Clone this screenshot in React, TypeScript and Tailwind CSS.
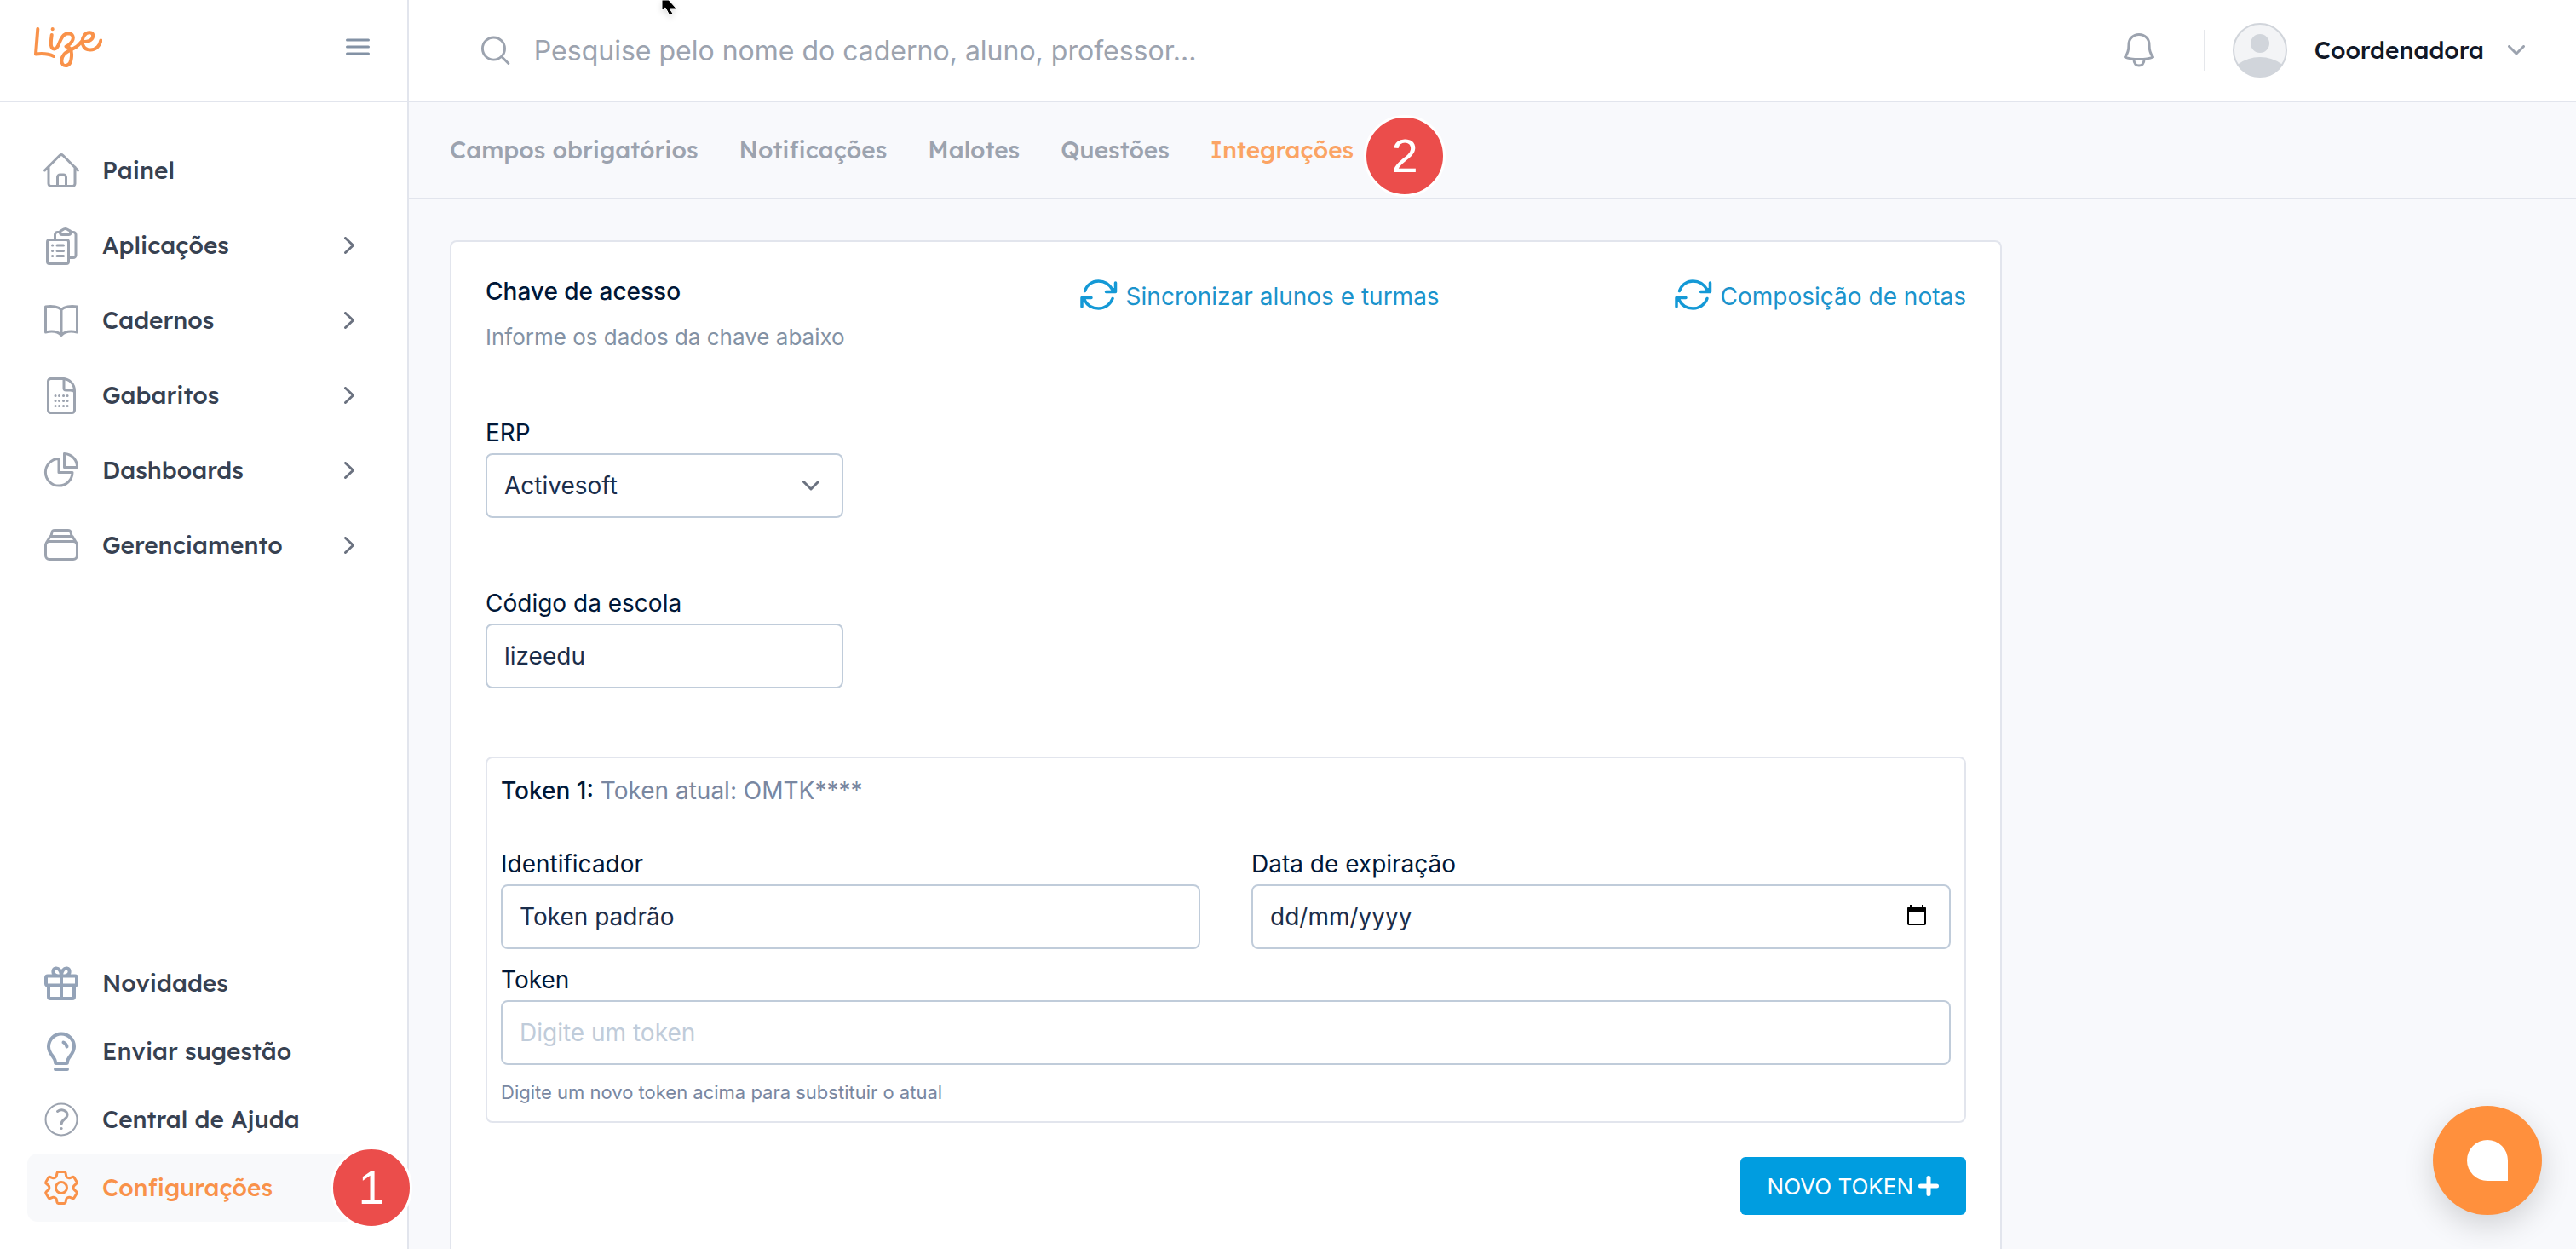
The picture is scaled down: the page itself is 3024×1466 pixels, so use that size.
import React from 'react';

type IconProps = { children: React.ReactNode; width?: number };

function NavIcon({ children, width = 3 }: IconProps) {
  return (
    <svg
      className="size-12 shrink-0"
      viewBox="0 0 48 48"
      fill="none"
      stroke="currentColor"
      strokeWidth={width}
      strokeLinecap="round"
      strokeLinejoin="round"
      aria-hidden="true"
    >
      {children}
    </svg>
  );
}

const homeIcon = (
  <NavIcon width={3}>
    <path d="M4.500 24 22 6.500a2.900 2.900 0 0 1 4 0L43.500 24M9 20v19.500a3 3 0 0 0 3 3h25a3 3 0 0 0 3-3V20M19.500 42.500V32a3 3 0 0 1 3-3h4a3 3 0 0 1 3 3v10.500" />
  </NavIcon>
);

const clipboardIcon = (
  <NavIcon width={3}>
    <rect x="7.500" y="17.500" width="25" height="28" rx="2.500" />
    <path d="M16.500 17V11.500a3 3 0 0 1 3-3h3.500M34.500 8.500H38a3 3 0 0 1 3 3V35.500a3 3 0 0 1-3 3h-4.500M24 6.500c1.500 0 1.800-2 4.700-2s3.300 2 4.800 2c2 0 2.500 5-1 5h-7.500c-3.500 0-3-5-1-5zM19 24h7.500M19 30.500h7.500M19 36.500h7.500M13.500 24h.2M13.500 30.500h.2M13.500 36.500h.2" />
  </NavIcon>
);

const bookIcon = (
  <NavIcon width={3}>
    <path d="M24 11.500c-3-3.300-11-5-18.500-3.500v30c8-1.800 14.500-.8 18.500 3.500 4-4.300 10.500-5.300 18.500-3.500V8C35 6.500 27 8.200 24 11.500zM24 11.500v30" />
  </NavIcon>
);

const sheetIcon = (
  <NavIcon width={3}>
    <path d="M26 4.500H11.500a3 3 0 0 0-3 3v34a3 3 0 0 0 3 3h25a3 3 0 0 0 3-3V19C39.500 10.500 33 4.500 26 4.500zM27 4.500v11a2.500 2.500 0 0 0 2.500 2.500h5c3 0 5 1 5 3" />
    <path d="M17 24.500h.1M21.500 24.500h.1M26.500 24.500h.1M31 24.500h.1M17 30.500h.1M21.500 30.500h.1M26.500 30.500h.1M31 30.500h.1M17 36.500h.1M21.500 36.500h.1M26.500 36.500h.1M31 36.500h.1" />
  </NavIcon>
);

const pieIcon = (
  <NavIcon width={3}>
    <path d="M21 10.500A15.800 15.800 0 1 0 37 26.500H21z" />
    <path d="M27.500 4.500V20.500H42.500A15.500 15.500 0 0 0 27.500 4.500z" />
  </NavIcon>
);

const stackIcon = (
  <NavIcon width={3}>
    <rect x="5.500" y="19.500" width="37" height="21" rx="4.500" />
    <path d="M6.500 21 11 13.500h26l4.500 7.500M12 13l.8-3.500a3.500 3.500 0 0 1 3.400-3h15.600a3.500 3.500 0 0 1 3.400 3L36 13" />
  </NavIcon>
);

const giftIcon = (
  <NavIcon width={4}>
    <rect x="6" y="15.500" width="36" height="11" rx="2" />
    <path d="M9 27v13a2 2 0 0 0 2 2h26a2 2 0 0 0 2-2V27M24 15.500V42M24 15c0-5-3-9-6.500-8.500C13 7.500 13.500 14 18 15M24 15c0-5 3-9 6.500-8.500C35 7.500 34.500 14 30 15" />
  </NavIcon>
);

const bulbIcon = (
  <NavIcon width={4}>
    <path d="M17 37c0-7-8-9-8-18.500a15 15 0 0 1 30 0C39 28 31 30 31 37a1 1 0 0 1-1 1H18a1 1 0 0 1-1-1zM17 45h14M26.500 13.500c2 .8 3.500 2.500 4 5" />
  </NavIcon>
);

const helpIcon = (
  <NavIcon width={2}>
    <circle cx="24" cy="24" r="18.500" />
    <path strokeWidth={3} d="M19.500 14.500c5-3.500 11.500-1 11.500 4 0 5.500-7 5-7 11" />
    <path strokeWidth={3} d="M24 34.500h.1" />
  </NavIcon>
);

const gearIcon = (
  <NavIcon width={3}>
    <circle cx="24" cy="24" r="6.500" />
    <path d="M20.500 5.500h7a1.500 1.500 0 0 1 1.500 1.200l.8 4c.2 1 2.700 2.400 3.700 2.100l3.800-1.300a1.500 1.500 0 0 1 1.800.7l3 5.100a1.500 1.500 0 0 1-.3 1.900l-3 2.700c-.8.700-.8 3.500 0 4.200l3 2.700a1.500 1.500 0 0 1 .3 1.900l-3 5.100a1.500 1.500 0 0 1-1.800.7l-3.800-1.300c-1-.3-3.500 1.100-3.700 2.100l-.8 4a1.500 1.500 0 0 1-1.500 1.200h-7a1.500 1.500 0 0 1-1.500-1.200l-.8-4c-.2-1-2.700-2.400-3.700-2.100l-3.800 1.300a1.500 1.500 0 0 1-1.800-.7l-3-5.100a1.500 1.500 0 0 1 .3-1.900l3-2.700c.8-.7.800-3.500 0-4.200l-3-2.700a1.500 1.500 0 0 1-.3-1.900l3-5.100a1.500 1.500 0 0 1 1.800-.7l3.800 1.300c1 .3 3.500-1.100 3.700-2.100l.8-4a1.500 1.500 0 0 1 1.500-1.200z" />
  </NavIcon>
);

function Logo() {
  return (
    <svg
      className="h-12 w-20"
      viewBox="0 0 80 48"
      fill="none"
      stroke="#f9924a"
      strokeWidth="4"
      strokeLinecap="round"
      strokeLinejoin="round"
      role="img"
      aria-label="Lize"
    >
      <path d="M4.300 3 2 32.500C9 31.700 17 32 23 35" />
      <path d="M21.700 3v.2" />
      <path d="M20.700 10C20 15 19.500 19 20 22.500 20.700 27.500 26 28 28.500 22 31 16.500 33 8.500 40 8.300c6 0 7 5.200 4.500 9.200-1.800 3-4.500 5-7 6 5.500.5 7 4.500 6.500 11.500-.5 7.500-3.500 11-7 11-5.500 0-6-8-2-13 3.500-4.500 10-6 14.500-9 2.500-1.800 4.500-4 6.500-6.500 5 1.500 13-.500 13.200-6.500.1-4.500-6.700-5-10-.8-5 6.500-2.700 17.300 6.800 17.300 7 0 11.500-5.500 12.300-11" />
    </svg>
  );
}

function Chevron() {
  return (
    <svg className="h-5 w-3" viewBox="0 0 12 20" fill="none" stroke="#6b7280" strokeWidth="3" strokeLinecap="round" strokeLinejoin="round" aria-hidden="true">
      <path d="M1.500 1.500 10.500 10l-9 8.500" />
    </svg>
  );
}

function StepBadge({ n }: { n: number }) {
  return (
    <span className="flex size-24 items-center justify-center rounded-full border-3 border-white bg-[#eb4d4b] font-['Liberation_Sans',sans-serif] text-[56px] leading-none text-white">
      {n}
    </span>
  );
}

function SyncIcon() {
  return (
    <svg className="h-9 w-11" viewBox="0 0 44 36" fill="none" stroke="#1499d6" strokeWidth="3.500" strokeLinecap="round" strokeLinejoin="round" aria-hidden="true">
      <path d="M5.500 13.500C8 6.500 14 2 21.500 2 29 2 34.500 6 38 12M41.500 4v10.500H30.500M38 22.500C35.500 29.500 29 34 21.500 34 14 34 8 30 5 24M2 32V21.500h11" />
      <path d="M41.500 14.500h-6l6-6zM2 21.500h6l-6 6z" fill="#1499d6" strokeWidth="1" />
    </svg>
  );
}

const mainNav = [
  { label: 'Painel', icon: homeIcon, expandable: false },
  { label: 'Aplicações', icon: clipboardIcon, expandable: true },
  { label: 'Cadernos', icon: bookIcon, expandable: true },
  { label: 'Gabaritos', icon: sheetIcon, expandable: true },
  { label: 'Dashboards', icon: pieIcon, expandable: true },
  { label: 'Gerenciamento', icon: stackIcon, expandable: true },
];

const footerNav = [
  { label: 'Novidades', icon: giftIcon, tone: 'text-[#94a3b8]' },
  { label: 'Enviar sugestão', icon: bulbIcon, tone: 'text-[#94a3b8]' },
  { label: 'Central de Ajuda', icon: helpIcon, tone: 'text-[#9ca3af]' },
];

const tabs = ['Campos obrigatórios', 'Notificações', 'Malotes', 'Questões'];

const fieldBase = 'h-19 w-full rounded-lg border-2 border-[#c0ccda] bg-white px-5 text-[28px] text-[#1b2e4b] outline-none';
const field = `${fieldBase} placeholder:text-[#c0ccda]`;
const label = 'block text-[28px] leading-10 text-[#001737]';

function Sidebar() {
  return (
    <aside className="flex w-120 shrink-0 flex-col border-r-2 border-[#e2e5ed] bg-white font-['Lexend','Inter',sans-serif] text-[28px] font-medium text-[#374151]">
      <div className="flex h-30 shrink-0 items-center justify-between border-b-2 border-[#e2e5ed] pr-11 pb-2 pl-10">
        <a href="#inicio">
          <Logo />
        </a>
        <button type="button" aria-label="Recolher menu">
          <svg className="h-5 w-7" viewBox="0 0 28 20" stroke="#8392a5" strokeWidth="3" strokeLinecap="round" aria-hidden="true">
            <path d="M1.500 2h25M1.500 10h25M1.500 18h25" />
          </svg>
        </button>
      </div>
      <nav className="flex flex-1 flex-col gap-2 px-8 pt-10">
        {mainNav.map((item) => (
          <a key={item.label} href="#menu" className="flex h-20 items-center gap-6 pr-[30px] pl-4">
            <span className="text-[#9ca3af]">{item.icon}</span>
            <span className="flex-1">{item.label}</span>
            {item.expandable && <Chevron />}
          </a>
        ))}
      </nav>
      <nav className="flex flex-col px-8 pb-8">
        {footerNav.map((item) => (
          <a key={item.label} href="#menu" className="flex h-20 items-center gap-6 pl-4">
            <span className={item.tone}>{item.icon}</span>
            <span>{item.label}</span>
          </a>
        ))}
        <a href="#configuracoes" className="relative flex h-20 items-center gap-6 rounded-xl bg-[#f8f9fb] pl-4 text-[#f9924a]">
          <span>{gearIcon}</span>
          <span>Configurações</span>
          <span className="absolute -top-2 -right-[38px]">
            <StepBadge n={1} />
          </span>
        </a>
      </nav>
    </aside>
  );
}

function TopBar() {
  return (
    <header className="flex h-30 shrink-0 items-center border-b-2 border-[#e2e5ed] bg-white pr-15 pl-20">
      <label className="flex flex-1 items-center gap-7 pl-1">
        <svg className="size-9" viewBox="0 0 36 36" fill="none" stroke="#9ca3af" strokeWidth="3" strokeLinecap="round" aria-hidden="true">
          <circle cx="16" cy="16" r="13.500" />
          <path d="M26 26l8 8" />
        </svg>
        <input
          type="search"
          aria-label="Pesquisar"
          placeholder="Pesquise pelo nome do caderno, aluno, professor..."
          className="w-full bg-transparent pt-0.5 text-[32px] leading-10 outline-none placeholder:text-[#9ca3af]"
        />
      </label>
      <div className="flex items-center">
        <button type="button" aria-label="Notificações">
          <svg className="size-12" viewBox="0 0 48 48" fill="none" stroke="#9ca3af" strokeWidth="3" strokeLinecap="round" strokeLinejoin="round" aria-hidden="true">
            <path d="M24 5.500c-7 0-12 5-12 12 0 6-.5 10-4.500 14.500C12 34 18 34.500 24 34.500s12-.5 16.500-2.500c-4-4.500-4.500-8.500-4.500-14.500 0-7-5-12-12-12zM18 35c0 4.500 2.500 7 6 7s6-2.500 6-7" />
          </svg>
        </button>
        <span className="ml-13 h-12 w-0.5 bg-[#e5e7eb]" />
        <button type="button" className="ml-8 flex items-center">
          <svg className="size-16" viewBox="0 0 64 64" aria-hidden="true">
            <clipPath id="avatar-clip">
              <circle cx="32" cy="32" r="31" />
            </clipPath>
            <circle cx="32" cy="32" r="31" fill="#f3f4f6" />
            <g clipPath="url(#avatar-clip)" fill="#d1d5db">
              <circle cx="32" cy="24" r="11" />
              <ellipse cx="32" cy="68" rx="36" ry="28" />
            </g>
            <circle cx="32" cy="32" r="31" fill="none" stroke="#d1d5db" strokeWidth="2" />
          </svg>
          <span className="ml-8 font-['Lexend','Inter',sans-serif] text-[28px] font-medium text-[#111827]">Coordenadora</span>
          <svg className="ml-7 h-3 w-5" viewBox="0 0 20 12" fill="none" stroke="#9ca3af" strokeWidth="3" strokeLinecap="round" strokeLinejoin="round" aria-hidden="true">
            <path d="M1.500 1.500 10 10l8.500-8.500" />
          </svg>
        </button>
      </div>
    </header>
  );
}

export default function App() {
  return (
    <div className="relative flex h-screen overflow-hidden bg-[#f8f9fc] font-['Inter',sans-serif]">
      <Sidebar />
      <div className="flex min-w-0 flex-1 flex-col">
        <TopBar />
        <nav className="flex h-[114px] shrink-0 items-center gap-12 border-b-2 border-[#e2e5ed] px-12 font-['Lexend','Inter',sans-serif] text-[28px] font-medium text-[#9ca3af]">
          {tabs.map((t) => (
            <a key={t} href="#aba">
              {t}
            </a>
          ))}
          <a href="#integracoes" className="relative text-[#fba464]" aria-current="page">
            Integrações
            <span className="absolute -top-5 left-full ml-3">
              <StepBadge n={2} />
            </span>
          </a>
        </nav>
        <main className="flex min-h-0 flex-1 flex-col px-12 pt-12">
          <div className="flex w-3/4 flex-1 flex-col pr-3.5">
            <form className="flex-1 rounded-t-lg border-2 border-b-0 border-[#e2e5ed] bg-white px-10 pt-9.5" onSubmit={(e) => e.preventDefault()}>
              <div className="flex items-start justify-between">
                <div>
                  <h1 className="text-[28px] leading-10 font-medium text-[#001737]">Chave de acesso</h1>
                  <p className="mt-3.5 text-[26px] leading-10 text-[#8392a5]">Informe os dados da chave abaixo</p>
                </div>
                {['Sincronizar alunos e turmas', 'Composição de notas'].map((t) => (
                  <a key={t} href="#acao" className="flex items-start gap-2.5 pt-1.5 text-[28px] leading-10 text-[#1b93cc]">
                    <SyncIcon />
                    {t}
                  </a>
                ))}
              </div>
              <div className="mt-18 grid grid-cols-4 gap-5">
                <div>
                  <label className={label} htmlFor="erp">
                    ERP
                  </label>
                  <div className="relative mt-1">
                    <select id="erp" className={`${field} appearance-none`} defaultValue="Activesoft">
                      <option>Activesoft</option>
                    </select>
                    <svg className="pointer-events-none absolute top-8 right-7 h-3 w-5" viewBox="0 0 20 12" fill="none" stroke="#6b7280" strokeWidth="3" strokeLinecap="round" strokeLinejoin="round" aria-hidden="true">
                      <path d="M1.500 1.500 10 10l8.500-8.500" />
                    </svg>
                  </div>
                </div>
              </div>
              <div className="mt-20 grid grid-cols-4 gap-5">
                <div>
                  <label className={label} htmlFor="codigo">
                    Código da escola
                  </label>
                  <input id="codigo" type="text" defaultValue="lizeedu" className={`${field} mt-1`} />
                </div>
              </div>
              <fieldset className="mt-20 rounded-lg border-2 border-[#e2e5ed] px-4 pt-4.5 pb-3.5">
                <p className="text-[28px] leading-10 text-[#7987a1]">
                  <span className="font-medium text-[#001737]">Token 1:</span> Token atual: OMTK****
                </p>
                <div className="mt-11.5 grid grid-cols-2 gap-15">
                  <div>
                    <label className={label} htmlFor="identificador">
                      Identificador
                    </label>
                    <input id="identificador" type="text" defaultValue="Token padrão" className={`${field} mt-1`} />
                  </div>
                  <div>
                    <label className={label} htmlFor="expiracao">
                      Data de expiração
                    </label>
                    <div className="relative mt-1">
                      <input id="expiracao" type="text" placeholder="dd/mm/yyyy" className={`${fieldBase} placeholder:text-[#1b2e4b]`} />
                      <button type="button" aria-label="Abrir calendário" className="absolute top-6 right-7">
                        <svg className="h-6 w-6" viewBox="0 0 24 24" aria-hidden="true">
                          <path fill="#000" fillRule="evenodd" d="M4 0h2v2h12V0h2v2h1a2 2 0 0 1 2 2v18a2 2 0 0 1-2 2H3a2 2 0 0 1-2-2V4a2 2 0 0 1 2-2h1zM3 8v14h18V8z" />
                        </svg>
                      </button>
                    </div>
                  </div>
                </div>
                <label className={`${label} mt-4`} htmlFor="token">
                  Token
                </label>
                <input id="token" type="text" placeholder="Digite um token" className={`${field} mt-1`} />
                <p className="mt-3 text-[22px] leading-10 text-[#7987a1]">Digite um novo token acima para substituir o atual</p>
              </fieldset>
              <div className="mt-10 flex justify-end">
                <button type="button" className="flex h-17 items-center gap-1.5 rounded-md bg-[#009de0] px-8 text-[26px] text-white">
                  NOVO TOKEN
                  <svg className="size-6" viewBox="0 0 24 24" stroke="currentColor" strokeWidth="5" strokeLinecap="round" aria-hidden="true">
                    <path d="M12 2.500v19M2.500 12h19" />
                  </svg>
                </button>
              </div>
            </form>
          </div>
        </main>
      </div>
      <button
        type="button"
        aria-label="Abrir chat"
        className="absolute right-10 bottom-10 flex size-32 items-center justify-center rounded-full bg-[#ff903d] shadow-[0_12px_36px_rgba(0,0,0,0.16)]"
      >
        <span className="size-12 rounded-full rounded-br-none bg-white" />
      </button>
      <svg className="absolute top-0 left-194 h-6 w-6 drop-shadow-md" viewBox="0 0 24 24" aria-hidden="true">
        <path d="M1 0v12l4-3 5 9 4-2-4-6h8L9 0z" fill="#000" stroke="#fff" strokeWidth="1" />
      </svg>
    </div>
  );
}
